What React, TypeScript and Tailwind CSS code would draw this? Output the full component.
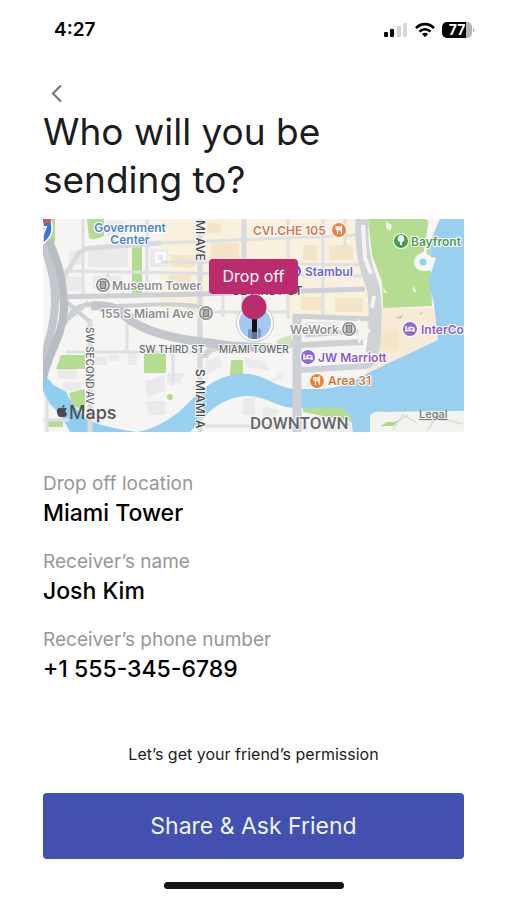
import type { ReactNode } from "react";
import { FaApple } from "react-icons/fa";

const details = [
  { label: "Drop off location", value: "Miami Tower" },
  { label: "Receiver’s name", value: "Josh Kim" },
  { label: "Receiver’s phone number", value: "+1 555-345-6789" },
];

const StatusBar = () => (
  <div className="flex h-[60px] items-center justify-between pl-[54px] pr-8">
    <span className="text-[19px] font-semibold text-black">4:27</span>
    <div className="flex items-center gap-[7px]">
      <svg width="24" height="16" viewBox="0 0 24 16" aria-hidden="true">
        <rect x="0" y="10" width="4" height="5" rx="1" fill="#000" />
        <rect x="6" y="7" width="4" height="8" rx="1" fill="#000" />
        <rect x="13" y="4" width="4" height="11" rx="1" fill="#d6d6d6" />
        <rect x="19" y="1" width="4" height="14" rx="1" fill="#d6d6d6" />
      </svg>
      <svg width="20" height="16" viewBox="0 0 20 16" aria-hidden="true">
        <g fill="none" stroke="#000" strokeWidth="2.7">
          <path d="M1 6.2C6 .8 14 .8 19 6.2" />
          <path d="M4.5 9.7c3-3.3 8-3.3 11 0" />
        </g>
        <path d="M6.9 11.9c1.8-1.7 4.4-1.7 6.2 0L10 15.2z" />
      </svg>
      <svg width="33" height="18" viewBox="0 0 33 18" aria-label="Battery 77 percent">
        <path d="M5 1h19v16H5a5 5 0 0 1-5-5V6a5 5 0 0 1 5-5z" fill="#000" />
        <path d="M24 1h1a5 5 0 0 1 5 5v6a5 5 0 0 1-5 5h-1z" fill="#b4b4b4" />
        <path d="M31 7c2 .6 2 3.400 0 4z" fill="#b4b4b4" />
        <text x="15" y="14" textAnchor="middle" fontSize="14" fontWeight="700" fill="#fff">77</text>
      </svg>
    </div>
  </div>
);

const Poi = ({ x, y, color, children }: { x: number; y: number; color: string; children: ReactNode }) => (
  <g transform={`translate(${x} ${y})`}>
    <circle r="8" fill="#fff" />
    <circle r="7" fill={color} />
    {children}
  </g>
);

const Fork = () => (
  <path d="M-3-4v3q1.500 1.500 3 0v-3M-1.500-4v8M2.500 4v-8q-2 2-1 5h1" fill="none" stroke="#fff" strokeWidth="1.200" />
);

const Bed = () => (
  <path d="M-4-3v6M-4 1.500h8M4 3v-3q0-1.500-1.500-1.500h-3V1M-2.500-.8h1" fill="none" stroke="#fff" strokeWidth="1.400" />
);

const Building = () => (
  <>
    <circle r="5.500" fill="#d9d9d9" />
    <path d="M-2.500-3.500h5v7h-5z" fill="#aaa" stroke="#808080" strokeWidth="1.200" />
  </>
);

const DropOffMap = () => (
  <svg viewBox="0 0 421 213" className="mt-[15px] block w-full" role="img" aria-label="Map of the drop off location">
    <rect width="421" height="213" fill="#f6f5f3" />

    {/* city blocks */}
    <path d="M118 0h200l16 98H118z" fill="#faf0de" />
    <path d="M162 76h84v36l-84 10z" fill="#f7f5f0" />
    <path d="M324 89h68l4 34-72 31z" fill="#f7ebd6" />
    <g fill="#f5e5c8">
      <path d="M128 36h24v12h-24zM126 56h22v15h-22zM164 4h14v10h-14zM168 24h28v16h-28zM260 26h14v16h-14zM286 26h24v15h-24zM258 78h22v13h-22zM292 79h28v14h-28zM334 110h22v22h-22zM143 84h10v10h-10z" />
    </g>
    <g fill="#eaeaea">
      <path d="M45 30h40v18H45zM26 32h12v14H26zM50 57h28v13H50zM22 58h16v14H22zM107 30h18v18h-18zM64 2h18v14H64zM24 88h14v9H24zM15 149h19v11H15zM20 163h18v9H20zM52 138h12v8H52zM66 136h10v6H66zM85 134h9v12H85zM102 162l20-6v16l-18 7zM102 182h20v14h-16zM124 154h17l-4 10h-13zM162 143l14-6 4 10-16 8zM200 138l20 4 8 10-24-4zM228 162l12-10v8zM200 180l12-2v18h-12zM220 187l16 4-4 10h-12zM262 103h34v14h-34z" />
    </g>
    <path d="M112 33h11v11h-11z" fill="#fafafa" />
    <path d="M115 36h5v5h-5z" fill="#e6e6e6" />

    {/* parks */}
    <g fill="#b5dd91">
      <path d="M325 0h71l-9 23 2 64-49 2-1-26-10-27z" />
      <path d="M44 0h17v17q-11 5-15 2zM89 27h10v50H89zM6 0h6v24H6zM18 136h24v14H13zM101 134h22v20h-22zM26 174l16-4v23l-13-7zM3 201h17v7H3zM188 141h12v15l-13 1z" />
      <path d="M260 189l36-5q10 5 13 14l1 5-50-10z" />
      <path d="M234 121l14-5v9h-14z" opacity=".6" />
      <circle cx="127" cy="178" r="3" />
    </g>
    <path d="M283 203h27v10h-27z" fill="#ececea" />

    {/* water */}
    <path d="M396 0h25v192l-77 1q-16-1-17 5v15h-17l-2-15q-6-10-17-10-27 2-41 1c-18-2-30-13-47-12-18 1-30 10-38 17l-18 19H94q20-3 42-20c20-19 33-35 59-38 24-3 34 13 56 15h26c24-1 36-10 52-18l66-31-4-36-4-17q-3-8 2-16l-2-26z" fill="#99d0f0" />
    <path d="M0 161q6-4 9 4l14 8 7 13 14 15q20 8 50 12H27q-7-14-14-22Q4 184 0 171z" fill="#8ecff1" />
    <path d="M386 0h11l-12 26q-4 10 3 12l5 1-4 12-5 1-8-1q-6-4-4-9t9-10z" fill="#f7f7f3" />
    <circle cx="380" cy="43" r="9" fill="#f7f7f3" />
    <circle cx="380" cy="43" r="3.500" fill="#99d0f0" />
    <path d="M343 2l6 4-2 6-4-3zM340 68l4 6h-3zM383 0h6l-3 5z" fill="#eef3e5" />
    <path d="M370 66l4 8-4-2z" fill="#eef3e5" />
    <path d="M352 99l9-4-3 5zM376 94l6-1-5 3z" fill="#bddb97" />
    <path d="M327 197q2-5 14-4l80-1v21h-94z" fill="#f3f3ef" />
    <path d="M338 207l16-4 11-7M350 210l10-14 14 8M384 212l9-14 27 7" fill="none" stroke="#dfe0e2" strokeWidth="2" />
    <path d="M338 207l6-4h8l5-3-7 7z" fill="#aed982" />

    {/* side streets */}
    <g fill="none" stroke="#dee0e3" strokeWidth="3">
      <path d="M20 52l300 5M40 0v78M65 52v22M104 0v78M118 24l202-8M118 43l200 3M245 0v100M280 0v100M302 0v28" />
      <path d="M180 50v48M23 133h133M84 100v33M130 134v32M0 201h26M4 180v33M162 207h80M165 93h80" />
    </g>
    <g fill="none" stroke="#d8dade" strokeWidth="5">
      <path d="M47 100v113M157 0v213M201 0v90M11 74L36 34q6-5 14-5l68-5" />
    </g>
    <g fill="none" stroke="#cdd0d4" strokeWidth="5">
      <path d="M12 78l146-3 164-5M250 97l76 3M262 116l55-4" />
      <path d="M22 105q8-20 23-19 20 2 55 0t58 2" strokeWidth="4" />
      <path d="M24 83l22 19M24 101l22-18M46 86q24-6 45 12" strokeWidth="4" />
      <path d="M254 96v117" strokeWidth="9" />
      <path d="M258 126l62-3M258 151l65-4q8-2 8-12" strokeWidth="6" />
    </g>
    <path d="M319 0q-2 35 10 65 5 16 2 57l-2 12" fill="none" stroke="#cfd2d6" strokeWidth="13" />
    <path d="M320 6l2 33 6 16M331 77l-2 12M317 104l8 8-8 8z" fill="none" stroke="#f6f4ed" strokeWidth="4" />

    {/* highways */}
    <path d="M162 139q2-10 14-10h60q12-1 16-8" fill="none" stroke="#d3d5d9" strokeWidth="6" />
    <g fill="none" strokeWidth="8">
      <path d="M0 24q13 34 12 61-1 24-13 59" stroke="#c3c7cd" />
      <path d="M3 17q18 33 18 72c-1 30-17 46-21 71" stroke="#b8bdc3" />
      <path d="M48 87q22-2 34 10 20 18 70 25l36 5 40 2" stroke="#c3c7cc" strokeWidth="9" />
    </g>

    {/* interstate shield */}
    <path d="M0 2q4 2 8 0 3 12-3 18l-5 5z" fill="#3478d1" stroke="#fff" strokeWidth="1.500" />
    <path d="M0 0h8v4H0z" fill="#dd5260" />
    <path d="M0 8h3l-3 8" fill="none" stroke="#fff" strokeWidth="1.800" />

    {/* street names */}
    <g fill="#66686c" stroke="#f7f7f7" strokeWidth="2" paintOrder="stroke" fontSize="10" fontWeight="500">
      <text transform="translate(43 108) rotate(90)">SW SECOND AV</text>
      <text x="96" y="134">SW THIRD ST</text>
      <text x="176" y="134">MIAMI TOWER</text>
      <g fill="#45474c" fontSize="12">
        <text transform="translate(153 150) rotate(90)">S MIAMI A</text>
        <text transform="translate(153 1) rotate(90)">MI AVE</text>
        <text x="189" y="76">SE FIRST ST</text>
      </g>
      <text x="207" y="210" fontSize="17" className="font-[Roboto,sans-serif]">DOWNTOWN</text>
    </g>

    {/* places */}
    <g stroke="#fff" strokeWidth="2" strokeLinejoin="round" paintOrder="stroke" fontSize="12" fontWeight="600">
      <text x="87" y="13" textAnchor="middle" fill="#4c83d8">Government</text>
      <text x="87" y="25" textAnchor="middle" fill="#4c83d8">Center</text>
      <text x="210" y="16" fill="#d5764b">CVI.CHE 105</text>
      <text x="262" y="57" fill="#6a62dc">Stambul</text>
      <text x="368" y="27" fill="#4e9b55">Bayfront</text>
      <text x="378" y="115" fill="#845bd0">InterCo</text>
      <text x="275" y="143" fill="#845bd0">JW Marriott</text>
      <text x="285" y="166" fill="#dc7138">Area 31</text>
      <g fill="#8b8c90">
        <text x="69" y="71">Museum Tower</text>
        <text x="57" y="99">155 S Miami Ave</text>
        <text x="247" y="115">WeWork</text>
      </g>
    </g>
    <Poi x={60} y={66} color="#858585"><Building /></Poi>
    <Poi x={163} y={94} color="#858585"><Building /></Poi>
    <Poi x={306} y={110} color="#858585"><Building /></Poi>
    <Poi x={296} y={11} color="#e88145"><Fork /></Poi>
    <Poi x={274} y={162} color="#ee8135"><Fork /></Poi>
    <Poi x={251} y={52} color="#6a50df"><Bed /></Poi>
    <Poi x={265} y={138} color="#8c65df"><Bed /></Poi>
    <Poi x={367} y={110} color="#8c65df"><Bed /></Poi>
    <Poi x={358} y={22} color="#44a047">
      <path d="M-1 4V1a3 3 0 0 1-2-4 3 3 0 0 1 6 0 3 3 0 0 1-2 4v3z" fill="#fff" />
    </Poi>

    <FaApple x="12" y="185" size={14} color="#47494c" />
    <text x="26" y="200" fontSize="18" fontWeight="500" fill="#505357">Maps</text>
    <a href="#legal">
      <text x="376" y="199" fontSize="11" fontWeight="500" fill="#777a7e" textDecoration="underline">Legal</text>
    </a>

    {/* drop off pin */}
    <circle cx="212" cy="104" r="17" fill="#a4c8f2" stroke="#fff" strokeWidth="2" />
    <circle cx="212" cy="104" r="18.500" fill="none" stroke="#c3c7cc" strokeWidth="1" />
    <path d="M205 110h4v10l-4-1zM215 109l3 1v8l-3 2z" fill="#7b9bc4" />
    <path d="M209 99h5v14h-5z" fill="#111319" />
    <path d="M209 113h5v7h-5z" fill="#5f6f8d" />
    <circle cx="211" cy="88" r="12.500" fill="#bb2c6d" />
    <rect x="166" y="40" width="89" height="35" rx="4" fill="#bb2c6d" />
    <text x="210.500" y="63" textAnchor="middle" fontSize="16" fill="#fff">Drop off</text>
  </svg>
);

const App = () => {
  return (
    <div className="flex min-h-screen flex-col bg-white font-[Inter,sans-serif]">
      <StatusBar />

      <main className="flex flex-1 flex-col px-[43px]">
        <button type="button" aria-label="Back" className="mt-5 flex h-7 w-7 items-center justify-center">
          <svg width="12" height="18" viewBox="0 0 12 18" fill="none" stroke="#777" strokeWidth="2.200" aria-hidden="true">
            <path d="M10 0.500L2 8.500l8 8" />
          </svg>
        </button>
        <h1 className="max-w-[300px] text-[37px] leading-[48px] text-[#1c1c1e]">Who will you be sending to?</h1>

        <DropOffMap />

        <dl className="mt-10 flex flex-col gap-5">
          {details.map((item) => (
            <div key={item.label}>
              <dt className="text-[19px] leading-6 text-[#96979b]">{item.label}</dt>
              <dd className="text-[23px] font-medium leading-[34px] text-black">{item.value}</dd>
            </div>
          ))}
        </dl>

        <p className="mt-auto text-center text-base text-[#1c1c1e]">Let’s get your friend’s permission</p>
        <button type="button" className="mt-[27px] h-[66px] rounded bg-[#4250af] text-[23px] text-[#f0f3ff]">
          Share &amp; Ask Friend
        </button>
      </main>

      <div className="mx-auto mb-[11px] mt-[23px] h-[7px] w-[180px] rounded-full bg-[#151515]" />
    </div>
  );
};

export default App;
